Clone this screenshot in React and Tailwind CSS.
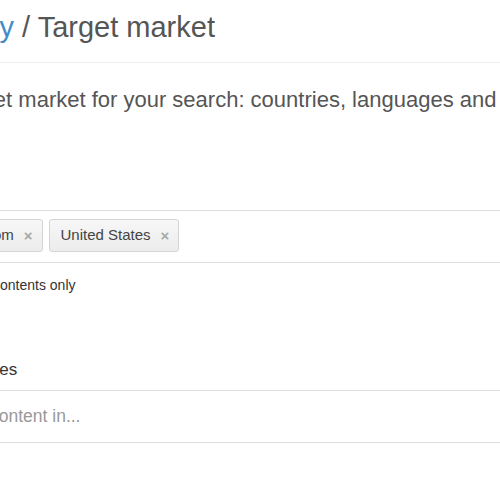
import React from "react";

const font = { fontFamily: '"Liberation Sans", Arial, sans-serif' };

function Tag({ label, className = "" }) {
  return (
    <div
      className={
        "flex h-[33px] shrink-0 items-center gap-[10px] rounded-[3px] border border-[#d4d4d4] bg-gradient-to-b from-[#f7f7f7] to-[#ececec] pl-[11px] pr-[9px] text-[15px] text-[#444] " +
        className
      }
    >
      <span>{label}</span>
      <span className="text-[15px] font-bold leading-none text-[#a8a8a8]">×</span>
    </div>
  );
}

export default function App() {
  return (
    <div className="h-[500px] w-[500px] overflow-hidden bg-white" style={font}>
      <div className="whitespace-nowrap">
        <div className="h-[62px] pt-[9px] text-[29px] leading-[36px] text-[#555]">
          <span className="-ml-[94px] inline-block">
            <a className="text-[#428bca]">Strategy</a> / Target market
          </span>
        </div>
        <div className="border-t border-[#eeeeee]" />
        <div className="mt-[22px] text-[22px] leading-[30px] text-[#555]">
          <span className="-ml-[148px] inline-block">
            Select the target market for your search: countries, languages and
          </span>
        </div>
        <div className="mt-[95px] h-[53px] border-y border-[#dddddd] pt-[8px]">
          <div className="-ml-[105px] flex gap-[6px]">
            <Tag label="United Kingdom" />
            <Tag label="United States" />
          </div>
        </div>
        <div className="mt-[12px] text-[14px] leading-[20px] text-[#333]">
          <span className="-ml-[7px] inline-block">contents only</span>
        </div>
        <div className="mt-[63px] text-[17px] leading-[24px] text-[#333]">
          <span className="-ml-[67px] inline-block">Languages</span>
        </div>
        <div className="mt-[8px] flex h-[53px] items-center border-y border-[#dddddd]">
          <span className="-ml-[10px] text-[17.5px] text-[#999]">content in...</span>
        </div>
      </div>
    </div>
  );
}
